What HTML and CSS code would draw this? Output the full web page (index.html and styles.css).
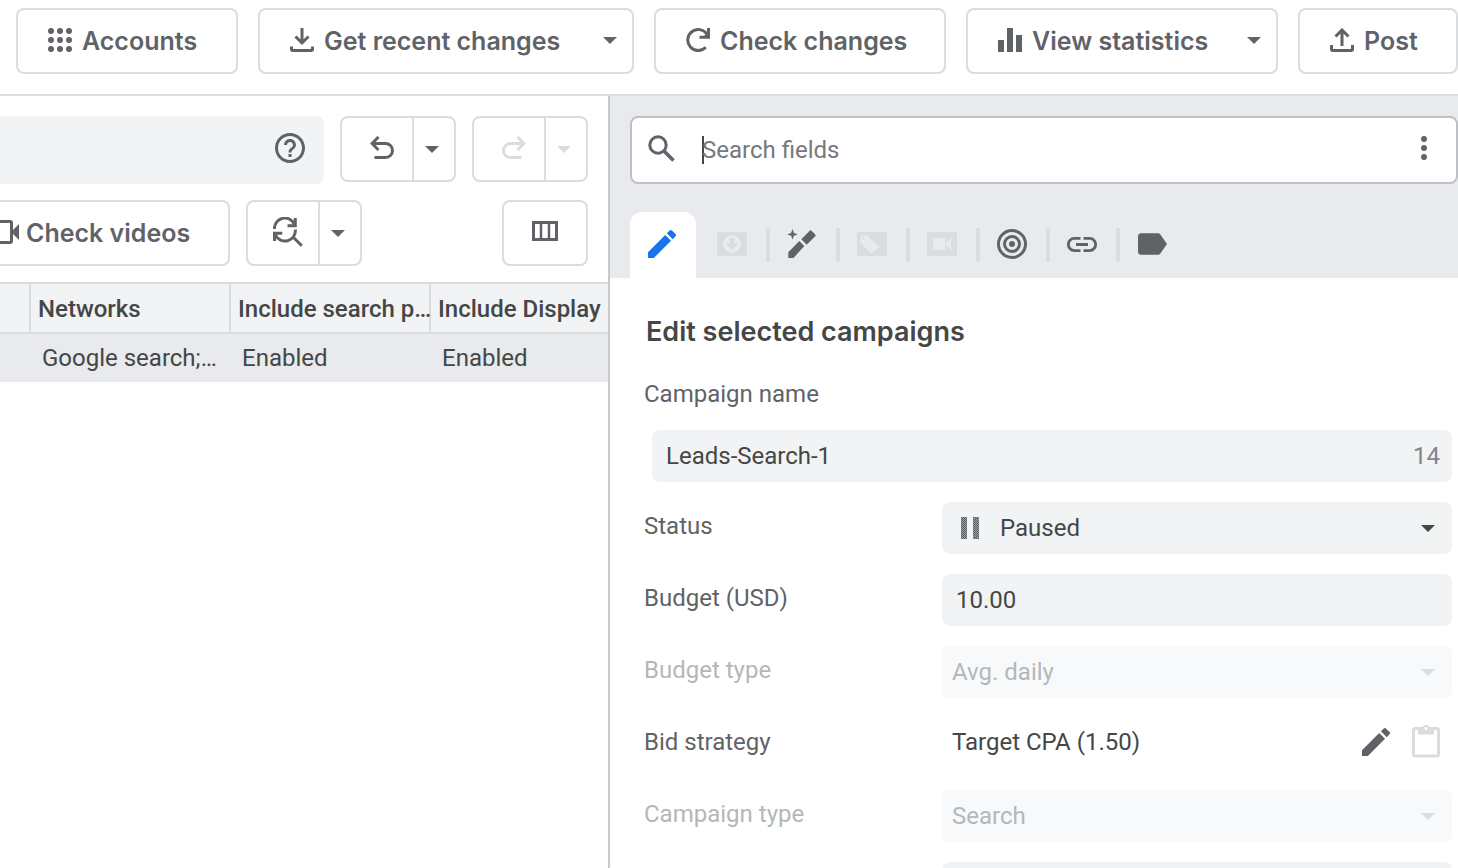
FILE: index.html
```
<!DOCTYPE html>
<html lang="en">
<head>
    <meta charset="UTF-8">
    <meta name="viewport" content="width=device-width, initial-scale=1.0">
    <title>Campaign Editor</title>
    <link rel="stylesheet" href="styles.css">
</head>
<body>
    <div class="toolbar">
        <button class="btn btn-accounts" type="button">
            <svg width="24" height="24" viewBox="0 0 24 24" fill="currentColor"><circle cx="3" cy="3" r="3"/><circle cx="12" cy="3" r="3"/><circle cx="21" cy="3" r="3"/><circle cx="3" cy="12" r="3"/><circle cx="12" cy="12" r="3"/><circle cx="21" cy="12" r="3"/><circle cx="3" cy="21" r="3"/><circle cx="12" cy="21" r="3"/><circle cx="21" cy="21" r="3"/></svg>
            <span>Accounts</span>
        </button>
        <button class="btn btn-recent" type="button">
            <svg width="24" height="24" viewBox="0 0 24 24" fill="none" stroke="currentColor" stroke-width="3"><path d="M12 0v15M5.5 8.5l6.5 6.5 6.5-6.5M1.5 18.500v3.100q0 .9.9.9h19.200q.9 0 .9-.9v-3.100"/></svg>
            <span>Get recent changes</span>
            <svg class="caret" width="14" height="7" viewBox="0 0 14 7" fill="currentColor"><path d="M0 0h14L7 7z"/></svg>
        </button>
        <button class="btn btn-check" type="button">
            <svg width="24" height="24" viewBox="0 0 24 24" fill="none" stroke="currentColor" stroke-width="3"><path d="M21 6.2A10.500 10.500 0 1 0 19.800 19.300"/><path d="M22.500 0v9.200H13.500"/><path d="M22 4v5h-5z" fill="currentColor" stroke="none"/></svg>
            <span>Check changes</span>
        </button>
        <button class="btn btn-stats" type="button">
            <svg width="24" height="24" viewBox="0 0 24 24" fill="currentColor"><path d="M0 12h6v12H0zM9 0h6v24H9zM18 7h6v17h-6z"/></svg>
            <span>View statistics</span>
            <svg class="caret" width="14" height="7" viewBox="0 0 14 7" fill="currentColor"><path d="M0 0h14L7 7z"/></svg>
        </button>
        <button class="btn btn-post" type="button">
            <svg width="24" height="24" viewBox="0 0 24 24" fill="none" stroke="currentColor" stroke-width="3"><path d="M12 18V2M5.5 8.500L12 2l6.500 6.500M1.500 17v4.600q0 .9.9.9h19.200q.9 0 .9-.9V17"/></svg>
            <span>Post</span>
        </button>
    </div>

    <div class="workspace">
        <div class="list-panel">
            <div class="row filter-row">
                <div class="filter-box">
                    <button class="icon-btn" type="button" aria-label="Help">
                        <svg width="30" height="30" viewBox="2 2 20 20" fill="currentColor"><path d="M11 18h2v-2h-2v2zm1-16C6.480 2 2 6.480 2 12s4.480 10 10 10 10-4.480 10-10S17.520 2 12 2zm0 18c-4.410 0-8-3.590-8-8s3.590-8 8-8 8 3.590 8 8-3.590 8-8 8zm0-14c-2.210 0-4 1.790-4 4h2c0-1.100.900-2 2-2s2 .900 2 2c0 2-3 1.750-3 5h2c0-2.250 3-2.500 3-5 0-2.210-1.790-4-4-4z"/></svg>
                    </button>
                </div>
                <div class="split">
                    <button class="split-main" type="button" aria-label="Undo">
                        <svg width="24" height="24" viewBox="0 0 24 24" fill="none" stroke="currentColor" stroke-width="3"><path d="M8.500 1L2 7.500 8.500 14M2 7.500h13.500a7 7 0 0 1 0 14H4.500"/></svg>
                    </button>
                    <button class="split-more" type="button" aria-label="Undo history">
                        <svg width="14" height="7" viewBox="0 0 14 7" fill="currentColor"><path d="M0 0h14L7 7z"/></svg>
                    </button>
                </div>
                <div class="split">
                    <button class="split-main" type="button" aria-label="Redo" disabled>
                        <svg width="24" height="24" viewBox="0 0 24 24" fill="none" stroke="currentColor" stroke-width="3"><path d="M15.500 1L22 7.500 15.500 14M22 7.500H8.500a7 7 0 0 0 0 14h11"/></svg>
                    </button>
                    <button class="split-more" type="button" aria-label="Redo history" disabled>
                        <svg width="14" height="7" viewBox="0 0 14 7" fill="currentColor"><path d="M0 0h14L7 7z"/></svg>
                    </button>
                </div>
            </div>
            <div class="row">
                <button class="btn btn-videos" type="button">
                    <svg width="28" height="24" viewBox="0 0 28 24" fill="none" stroke="currentColor" stroke-width="3"><rect x="1.500" y="1.500" width="19" height="21" rx="1.500"/><path d="M28 4v16l-6-6v-4z" fill="currentColor" stroke="none"/></svg>
                    <span>Check videos</span>
                </button>
                <div class="split">
                    <button class="split-main" type="button" aria-label="Find and replace">
                        <svg width="30" height="30" viewBox="0 0 30 30" fill="none" stroke="currentColor" stroke-width="3"><path d="M1.500 12A10.400 10.400 0 0 1 21.500 7.500M22.300 1v7.800H14.500M1.500 24v-7.700h7.800M2.500 18A10.400 10.400 0 0 0 22.300 12.500M19.500 19.500l9.300 9.300"/></svg>
                    </button>
                    <button class="split-more" type="button" aria-label="More find options">
                        <svg width="14" height="7" viewBox="0 0 14 7" fill="currentColor"><path d="M0 0h14L7 7z"/></svg>
                    </button>
                </div>
                <button class="btn btn-columns" type="button" aria-label="Columns">
                    <svg width="26" height="20" viewBox="0 0 26 20" fill="none" stroke="currentColor"><path d="M1.500 1.500h23v17h-23z" stroke-width="3"/><path d="M9 2v16M17 2v16" stroke-width="2.500"/></svg>
                </button>
            </div>

            <table>
                <thead>
                    <tr>
                        <th class="col-edge"></th>
                        <th>Networks</th>
                        <th>Include search p…</th>
                        <th>Include Display</th>
                    </tr>
                </thead>
                <tbody>
                    <tr>
                        <td></td>
                        <td>Google search;…</td>
                        <td>Enabled</td>
                        <td>Enabled</td>
                    </tr>
                </tbody>
            </table>
        </div>

        <div class="divider"></div>

        <div class="edit-panel">
            <div class="edit-head">
                <div class="search-box">
                    <svg width="27" height="27" viewBox="0 0 27 27" fill="none" stroke="currentColor" stroke-width="3"><circle cx="10" cy="10" r="8.200"/><path d="M16 16l9.500 9.500" stroke-width="3.500"/></svg>
                    <input class="search-input" type="text" placeholder="Search fields" aria-label="Search fields">
                    <button class="icon-btn" type="button" aria-label="More options">
                        <svg width="6" height="24" viewBox="0 0 6 24" fill="currentColor"><circle cx="3" cy="3" r="3"/><circle cx="3" cy="12" r="3"/><circle cx="3" cy="21" r="3"/></svg>
                    </button>
                </div>
                <div class="tabs">
                    <button class="tab active" type="button" aria-label="Edit">
                        <svg width="28" height="28" viewBox="3 3 18 18" fill="currentColor"><path d="M3 17.250V21h3.750L17.810 9.940l-3.750-3.750L3 17.250zM20.710 7.040c.390-.390.390-1.020 0-1.410l-2.340-2.340c-.390-.390-1.020-.390-1.410 0l-1.830 1.830 3.750 3.750 1.830-1.830z"/></svg>
                    </button>
                    <span class="tab-space"></span>
                    <button class="tab" type="button" aria-label="Budget" disabled>
                        <svg width="30" height="24" viewBox="0 0 30 24"><rect width="30" height="24" rx="2" fill="#dadce0"/><circle cx="15" cy="12" r="9" fill="#e8eaed"/><path d="M12.500 6h5v6H21l-6 6-6-6h3.500z" fill="#dadce0"/></svg>
                    </button>
                    <span class="tab-line"></span>
                    <button class="tab" type="button" aria-label="Auto edit">
                        <svg width="30" height="30" viewBox="0 0 30 30" fill="currentColor"><path d="M1.300 29v-5.700L12.300 12l5 5L6.500 29zM14.300 10.200l8.400-8.400q.9-.9 1.800 0l3.700 3.700q.9.900 0 1.800l-8.500 8.400zM5.500 0l1.400 3.900 3.900 1.400-3.900 1.400-1.400 3.900-1.400-3.900L.2 5.300l3.900-1.400z"/></svg>
                    </button>
                    <span class="tab-line"></span>
                    <button class="tab" type="button" aria-label="Offers" disabled>
                        <svg width="30" height="24" viewBox="0 0 30 24"><rect width="30" height="24" rx="2" fill="#dadce0"/><path d="M4.500 3.500H10L21.500 14q.7.700 0 1.400l-6.500 5.500q-.8.600-1.500 0L3.500 10.500V4.500q0-1 1-1z" fill="#e8eaed"/><circle cx="6.500" cy="6.500" r="1.300" fill="#dadce0"/></svg>
                    </button>
                    <span class="tab-line"></span>
                    <button class="tab" type="button" aria-label="Video" disabled>
                        <svg width="30" height="24" viewBox="0 0 30 24"><rect width="30" height="24" rx="2" fill="#dadce0"/><path d="M6 6h12v12H6zM18 12l6-6v12z" fill="#e8eaed"/></svg>
                    </button>
                    <span class="tab-line"></span>
                    <button class="tab" type="button" aria-label="Targeting">
                        <svg width="30" height="30" viewBox="0 0 30 30" fill="none" stroke="currentColor" stroke-width="3"><circle cx="15" cy="15" r="13.500"/><circle cx="15" cy="15" r="7.500"/><circle cx="15" cy="15" r="3" fill="currentColor" stroke="none"/></svg>
                    </button>
                    <span class="tab-line"></span>
                    <button class="tab" type="button" aria-label="URL options">
                        <svg width="30" height="15" viewBox="2 7 20 10" fill="currentColor"><path d="M3.900 12c0-1.710 1.390-3.100 3.100-3.100h4V7H7c-2.760 0-5 2.240-5 5s2.240 5 5 5h4v-1.900H7c-1.710 0-3.100-1.390-3.100-3.100zM8 13h8v-2H8v2zm9-6h-4v1.900h4c1.710 0 3.100 1.390 3.100 3.100s-1.390 3.100-3.100 3.100h-4V17h4c2.760 0 5-2.240 5-5s-2.240-5-5-5z"/></svg>
                    </button>
                    <span class="tab-line"></span>
                    <button class="tab" type="button" aria-label="Labels">
                        <svg width="29" height="22" viewBox="3 5 19 14" fill="currentColor"><path d="M17.630 5.840C17.270 5.330 16.670 5 16 5L5 5.010C3.900 5.010 3 5.900 3 7v10c0 1.100.900 1.990 2 1.990L16 19c.670 0 1.270-.330 1.630-.840L22 12l-4.370-6.160z"/></svg>
                    </button>
                </div>
            </div>

            <form class="edit-form">
                <h2>Edit selected campaigns</h2>
                <label class="name-label" for="name">Campaign name</label>
                <div class="field name-field">
                    <input id="name" type="text" value="Leads-Search-1">
                    <span class="count">14</span>
                </div>
                <div class="form-row">
                    <label for="status">Status</label>
                    <div class="field field-status">
                        <svg class="pause" width="18" height="22" viewBox="0 0 18 22">
                            <defs><pattern id="dots" width="2" height="2" patternUnits="userSpaceOnUse"><rect width="2" height="2" fill="#96999d"/><rect width="1" height="1" fill="#5f6368"/><rect x="1" y="1" width="1" height="1" fill="#5f6368"/></pattern></defs>
                            <path d="M0 0h6v22H0zM12 0h6v22h-6z" fill="url(#dots)"/>
                        </svg>
                        <select id="status">
                            <option>Paused</option>
                            <option>Enabled</option>
                        </select>
                        <svg class="arrow" width="14" height="7" viewBox="0 0 14 7" fill="currentColor"><path d="M0 0h14L7 7z"/></svg>
                    </div>
                </div>
                <div class="form-row">
                    <label for="budget">Budget (USD)</label>
                    <div class="field">
                        <input id="budget" type="text" value="10.00">
                    </div>
                </div>
                <div class="form-row disabled">
                    <label for="budget-type">Budget type</label>
                    <div class="field">
                        <select id="budget-type" disabled>
                            <option>Avg. daily</option>
                        </select>
                        <svg class="arrow" width="14" height="7" viewBox="0 0 14 7" fill="currentColor"><path d="M0 0h14L7 7z"/></svg>
                    </div>
                </div>
                <div class="form-row">
                    <span class="form-label">Bid strategy</span>
                    <div class="strategy">
                        <span class="strategy-text">Target CPA (1.50)</span>
                        <button class="icon-btn" type="button" aria-label="Edit bid strategy">
                            <svg width="28" height="28" viewBox="3 3 18 18" fill="currentColor"><path d="M3 17.250V21h3.750L17.810 9.940l-3.750-3.750L3 17.250zM20.710 7.040c.390-.390.390-1.020 0-1.410l-2.340-2.340c-.390-.390-1.020-.390-1.410 0l-1.830 1.830 3.750 3.750 1.830-1.830z"/></svg>
                        </button>
                        <button class="icon-btn" type="button" aria-label="Paste bid strategy" disabled>
                            <svg width="28" height="34" viewBox="0 0 28 34" fill="none" stroke="currentColor"><rect x="1.500" y="3.500" width="25" height="27.500" rx="1.500" stroke-width="3"/><path d="M6 3h16v6.500H6z" fill="currentColor" stroke="none"/><circle cx="14" cy="3.500" r="2.500" stroke-width="2" fill="#fff"/></svg>
                        </button>
                    </div>
                </div>
                <div class="form-row disabled">
                    <label for="campaign-type">Campaign type</label>
                    <div class="field">
                        <select id="campaign-type" disabled>
                            <option>Search</option>
                        </select>
                        <svg class="arrow" width="14" height="7" viewBox="0 0 14 7" fill="currentColor"><path d="M0 0h14L7 7z"/></svg>
                    </div>
                </div>
                <div class="form-row">
                    <span class="form-label"></span>
                    <div class="field"></div>
                </div>
            </form>
        </div>
    </div>
</body>
</html>
```
FILE: styles.css
```
* {
    box-sizing: border-box;
}

body {
    margin: 0;
    height: 100vh;
    overflow: hidden;
    display: flex;
    flex-direction: column;
    background-color: #fff;
    color: #444746;
    font-family: Roboto, "Liberation Sans", sans-serif;
    font-size: 24px;
    line-height: 28px;
}

button, input, select {
    font: inherit;
    color: inherit;
    margin: 0;
}

button {
    display: flex;
    align-items: center;
    padding: 0;
    border: none;
    background: none;
    color: #5f6368;
    cursor: pointer;
}

button:disabled {
    color: #dadce0;
    cursor: default;
}

svg {
    flex: none;
    display: block;
}

/* Top toolbar */
.toolbar {
    display: flex;
    flex: none;
    gap: 20px;
    padding: 8px 0 20px 16px;
    border-bottom: 2px solid #dadce0;
}

.btn {
    flex: none;
    height: 66px;
    gap: 10px;
    padding: 0 30px 2px 30px;
    border: 2px solid #dadce0;
    border-radius: 8px;
    background-color: #fff;
    font-family: "Google Sans", Inter, sans-serif;
    font-size: 25px;
    font-weight: 600;
    white-space: nowrap;
}

.btn span {
    padding-top: 2px;
}

.btn-accounts {
    width: 222px;
}

.btn-recent {
    width: 376px;
}

.btn-check {
    width: 292px;
}

.btn-stats {
    width: 312px;
}

.btn-post {
    width: 160px;
}

.btn-recent, .btn-stats {
    padding-right: 15px;
}

.caret {
    margin-left: auto;
}

/* Two panels */
.workspace {
    flex: 1;
    min-height: 0;
    display: grid;
    grid-template-columns: 608px 2px 1fr;
}

.list-panel {
    overflow: hidden;
    padding-top: 20px;
}

.divider {
    background: repeating-conic-gradient(#b4b7ba 0 25%, #dadce0 0 50%) 0 0 / 2px 2px;
}

.row {
    display: flex;
    gap: 16px;
    height: 66px;
    margin: 0 20px 16px 0;
}

.filter-row {
    height: 68px;
}

.filter-box {
    flex: 1;
    display: flex;
    align-items: center;
    justify-content: flex-end;
    margin-left: -20px;
    padding: 0 19px 4px 0;
    border-radius: 8px;
    background-color: #f1f3f4;
}

.split {
    display: flex;
    width: 116px;
    height: 66px;
    border: 2px solid #dadce0;
    border-radius: 8px;
}

.split-main {
    flex: 1;
    justify-content: center;
    padding: 0 0 2px 10px;
    border-right: 2px solid #dadce0;
}

.split-more {
    width: 40px;
    justify-content: center;
    padding-right: 4px;
}

.btn-videos {
    margin-left: -41px;
    width: 271px;
    gap: 7px;
}

.btn-columns {
    margin-left: auto;
    padding: 0 28px 4px 28px;
}

/* Campaign table */
table {
    width: 629px;
    table-layout: fixed;
    border-collapse: separate;
    border-spacing: 0;
}

th, td {
    text-align: left;
    white-space: nowrap;
}

th {
    width: 200px;
    height: 52px;
    padding: 2px 0 0 7px;
    border: 2px solid #dadce0;
    border-right: none;
    background-color: #f1f3f4;
    font-weight: 500;
}

.col-edge {
    width: 29px;
    border-left: none;
}

td {
    height: 48px;
    padding: 0 12px 0 13px;
    background-color: #e8eaed;
}

/* Edit panel */
.edit-panel {
    min-width: 0;
    overflow: hidden;
}

.edit-head {
    padding: 20px 0 0 20px;
    background-color: #e8eaed;
}

.search-box {
    display: flex;
    align-items: center;
    height: 68px;
    padding: 0 29px 4px 16px;
    border: 2px solid #bdc1c6;
    border-radius: 8px;
    background-color: #fff;
    color: #5f6368;
}

.search-input {
    flex: 1;
    min-width: 0;
    height: 32px;
    margin: 4px 0 0 27px;
    padding: 0;
    border: none;
    outline: none;
    background: linear-gradient(#444746, #444746) no-repeat 0 2px / 2px 28px;
}

.search-input::placeholder {
    color: #75797e;
    opacity: 1;
}

.tabs {
    display: flex;
    align-items: center;
    height: 66px;
    margin-top: 28px;
}

.tab {
    width: 66px;
    height: 66px;
    justify-content: center;
    padding: 0 2px 2px 0;
}

.tab.active {
    border-radius: 12px 12px 0 0;
    background-color: #fff;
    color: #1a73e8;
}

.tab-space, .tab-line {
    width: 4px;
    height: 34px;
}

.tab-line {
    background-color: #dadce0;
}

/* Form */
.edit-form {
    padding: 36px 6px 0 34px;
}

h2 {
    margin: 0 0 0 2px;
    font-family: "Google Sans", Inter, sans-serif;
    font-size: 27px;
    font-weight: 600;
    line-height: 36px;
}

label, .form-label {
    color: #5f6368;
}

.name-label {
    display: block;
    margin: 30px 0 22px 0;
}

.name-field {
    margin-left: 8px;
}

.field {
    position: relative;
    display: flex;
    align-items: center;
    height: 52px;
    border-radius: 8px;
    background-color: #f1f3f4;
}

.field input, .field select {
    flex: 1;
    min-width: 0;
    height: 52px;
    padding: 0 14px;
    border: none;
    outline: none;
    background: none;
    appearance: none;
}

.field .count {
    padding-right: 12px;
    color: #80868b;
}

.field-status select {
    padding-left: 58px;
}

.pause {
    position: absolute;
    left: 19px;
    top: 15px;
}

.arrow {
    position: absolute;
    right: 17px;
    top: 23px;
    pointer-events: none;
}

.form-row {
    display: grid;
    grid-template-columns: 298px 1fr;
    margin-top: 20px;
}

.form-row label, .form-row .form-label {
    padding-top: 10px;
}

.form-row.disabled label {
    color: #b4b7ba;
}

.disabled .field {
    background-color: #f8f9fa;
    color: #dadce0;
}

.disabled .field select {
    padding: 0 10px;
    color: #b4b7ba;
    opacity: 1;
}

.strategy {
    display: flex;
    align-items: center;
    height: 52px;
    gap: 22px;
    padding: 0 12px 4px 10px;
}

.strategy-text {
    flex: 1;
}
```
